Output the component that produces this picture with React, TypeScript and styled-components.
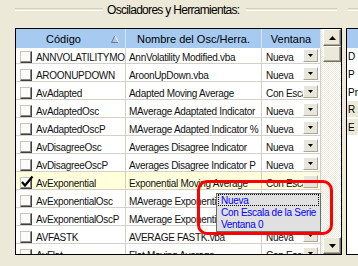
import React from 'react';
import styled, {createGlobalStyle} from 'styled-components';

const GlobalStyle = createGlobalStyle`
    html, body {
        margin: 0;
        padding: 0;
        background: #ece9d8;
        overflow: hidden;
    }
    body {
        font-family: "Liberation Sans", Arial, sans-serif;
    }
`;

interface RowData {
    code: string;
    name: string;
    win: string;
    checked?: boolean;
}

const rows: RowData[] = [
    {code: 'ANNVOLATILITYMOD', name: 'AnnVolatility Modified.vba', win: 'Nueva'},
    {code: 'AROONUPDOWN', name: 'AroonUpDown.vba', win: 'Nueva'},
    {code: 'AvAdapted', name: 'Adapted Moving Average', win: 'Con Escala de la Serie'},
    {code: 'AvAdaptedOsc', name: 'MAverage Adaptated Indicator', win: 'Nueva'},
    {code: 'AvAdaptedOscP', name: 'MAverage Adapted Indicator %', win: 'Nueva'},
    {code: 'AvDisagreeOsc', name: 'Averages Disagree Indicator', win: 'Nueva'},
    {code: 'AvDisagreeOscP', name: 'Averages Disagree Indicator P', win: 'Nueva'},
    {code: 'AvExponential', name: 'Exponential Moving Average', win: 'Con Escala de la Serie', checked: true},
    {code: 'AvExponentialOsc', name: 'MAverage Exponential Indicator', win: 'Nueva'},
    {code: 'AvExponentialOscP', name: 'MAverage Exponential Indicator %', win: 'Nueva'},
    {code: 'AVFASTK', name: 'AVERAGE FASTK.vba', win: 'Nueva'},
    {code: 'AvFlat', name: 'Flat Moving Average', win: 'Con Escala de la Serie'},
];

const sideRows = [
    {label: 'D'},
    {label: 'P'},
    {label: 'Pr'},
    {label: 'R', button: true},
    {label: 'E', button: true},
];

const COLS = [110, 136, 59];

/* Window */
const Window = styled.div`
    position: relative;
    width: 358px;
    height: 266px;
    background: #ece9d8;
    overflow: hidden;
`;

/* Group box title with etched lines */
const TitleRow = styled.div`
    display: flex;
    align-items: center;
    height: 19px;
    padding-left: 15px;
`;

const EtchedLine = styled.div<{ $width?: number }>`
    height: 1px;
    border-top: 1px solid #d0d0bf;
    border-bottom: 1px solid #fff;
    ${({$width}) => ($width ? `width: ${$width}px; flex-shrink: 0;` : 'flex: 1;')}
`;

const GroupTitle = styled.span`
    font-size: 12px;
    letter-spacing: -0.7px;
    color: #000;
    margin: 0 7px 0 4px;
    white-space: nowrap;
`;

const TitleGap = styled.div`
    width: 11px;
    flex-shrink: 0;
`;

/* Main content */
const Content = styled.div`
    display: flex;
    gap: 4px;
    margin-top: 9px;
    padding-left: 15px;
`;

const Grid = styled.div`
    width: 327px;
    height: 227px;
    box-sizing: border-box;
    border: 1px solid #000;
    display: flex;
    background: #fff;
`;

const Table = styled.div`
    width: 305px;
    display: flex;
    flex-direction: column;
`;

const HeaderRow = styled.div`
    display: flex;
    height: 19px;
    flex-shrink: 0;
    background: #a6caf0;
`;

const HeaderCell = styled.div<{ $w: number }>`
    width: ${({$w}) => $w}px;
    flex-shrink: 0;
    box-sizing: border-box;
    border-right: 1px solid #d6e4f2;
    display: flex;
    align-items: center;
    font-size: 11px;
    color: #000;
    white-space: nowrap;
`;

const HeaderLabel = styled.span`
    flex: 1;
    text-align: center;
`;

const SortIcon = styled.svg`
    width: 8px;
    height: 8px;
    margin-right: 6px;
    flex-shrink: 0;
`;

const Viewport = styled.div`
    flex: 1;
    overflow: hidden;
`;

/* rows scrolled a couple of pixels */
const ScrollContent = styled.div`
    margin-top: -2px;
`;

const Row = styled.div<{ $hl?: boolean }>`
    display: flex;
    height: 18px;
    box-sizing: border-box;
    border-bottom: 1px solid #d4d0c8;
    background: ${({$hl}) => ($hl ? '#ffffdc' : '#fff')};
`;

const Cell = styled.div<{ $w: number; $pad?: number }>`
    width: ${({$w}) => $w}px;
    flex-shrink: 0;
    box-sizing: border-box;
    border-right: 1px solid #d4d0c8;
    padding-left: ${({$pad}) => $pad ?? 3}px;
    display: flex;
    align-items: flex-end;
    overflow: hidden;
`;

const CellText = styled.span`
    flex: 1;
    min-width: 0;
    overflow: hidden;
    white-space: nowrap;
    font-size: 10px;
    letter-spacing: -0.3px;
    line-height: 11px;
    color: #111;
`;

const CheckBox = styled.div`
    position: relative;
    width: 12px;
    height: 12px;
    box-sizing: border-box;
    flex-shrink: 0;
    margin-right: 4px;
    background: #fbfbf8;
    border-top: 1px solid #c8c6bc;
    border-left: 1px solid #c8c6bc;
    border-right: 1px solid #404040;
    border-bottom: 1px solid #404040;
    box-shadow: inset -1px -1px 0 #8a8a8a;
`;

const CheckMark = styled.svg`
    position: absolute;
    left: -1px;
    top: -3px;
    width: 14px;
    height: 13px;
`;

const DropButton = styled.div`
    width: 15px;
    height: 13px;
    flex-shrink: 0;
    box-sizing: border-box;
    margin: 0 2px 1px 0;
    background: #e8e6da;
    border-top: 1px solid #fff;
    border-left: 1px solid #fff;
    border-right: 1px solid #aca899;
    border-bottom: 1px solid #aca899;
    display: flex;
    align-items: center;
    justify-content: center;
`;

/* Scrollbar */
const ScrollBar = styled.div`
    width: 20px;
    display: flex;
    flex-direction: column;
    background: repeating-conic-gradient(#fff 0 25%, #ece9d8 0 50%) 0 0 / 2px 2px;
    padding-left: 2px;
    box-sizing: border-box;
`;

const ScrollButton = styled.div<{ $h: number }>`
    height: ${({$h}) => $h}px;
    flex-shrink: 0;
    box-sizing: border-box;
    background: #ece9d8;
    border-top: 1px solid #fff;
    border-left: 1px solid #fff;
    border-right: 1px solid #716f64;
    border-bottom: 1px solid #716f64;
    box-shadow: inset -1px -1px 0 #aca899;
    display: flex;
    align-items: center;
    justify-content: center;
`;

const Track = styled.div`
    flex: 1;
`;

/* Side grid on the right */
const SidePanel = styled.div`
    width: 40px;
    height: 227px;
    flex-shrink: 0;
    box-sizing: border-box;
    border: 1px solid #000;
    background: #fff;
    display: flex;
    flex-direction: column;
`;

const SideHeader = styled.div`
    height: 19px;
    flex-shrink: 0;
    background: #a6caf0;
`;

const SideRow = styled.div<{ $button?: boolean; $first?: boolean }>`
    height: ${({$first}) => ($first ? 16 : 18)}px;
    box-sizing: border-box;
    display: flex;
    align-items: flex-end;
    padding: 0 0 ${({$button}) => ($button ? 2 : 1)}px 1px;
    background: ${({$button}) => ($button ? '#ece9d8' : '#fff')};
    border-bottom: 1px solid #fff;
    border-top: ${({$button}) => ($button ? '1px solid #fff' : 'none')};
    font-size: 10px;
    line-height: 11px;
    color: #000;
`;

/* Open dropdown list */
const DropList = styled.div`
    position: absolute;
    left: 216px;
    top: 193px;
    width: 105px;
    box-sizing: border-box;
    border: 1px solid #6d6d6d;
    background: #e0e0e0;
    padding: 0 1px 1px 1px;
`;

const DropItem = styled.div<{ $focus?: boolean }>`
    height: 12px;
    box-sizing: border-box;
    padding-left: 2px;
    font-size: 10px;
    letter-spacing: -0.3px;
    line-height: 11px;
    color: #0000ff;
    white-space: nowrap;
    border: 1px ${({$focus}) => ($focus ? 'dotted #000' : 'solid transparent')};
`;

/* Red annotation */
const Highlight = styled.div`
    position: absolute;
    left: 197px;
    top: 180px;
    width: 136px;
    height: 55px;
    box-sizing: border-box;
    border: 3px solid #ff0000;
    border-radius: 10px;
`;

const DownArrow: React.FC<{ w?: number }> = ({w = 5}) => (
    <svg width={w} height={Math.ceil(w / 2)} viewBox={`0 0 ${w} ${Math.ceil(w / 2)}`}>
        <polygon points={`0,0 ${w},0 ${w / 2},${Math.ceil(w / 2)}`} fill="#000"/>
    </svg>
);

const UpArrow: React.FC = () => (
    <svg width={7} height={4} viewBox="0 0 7 4">
        <polygon points="0,4 7,4 3.5,0" fill="#000"/>
    </svg>
);

const App: React.FC = () => {
    return (
        <>
            <GlobalStyle/>
            <Window>
                <TitleRow>
                    <EtchedLine $width={88}/>
                    <GroupTitle>Osciladores y Herramientas:</GroupTitle>
                    <EtchedLine/>
                    <TitleGap/>
                    <EtchedLine $width={10}/>
                </TitleRow>

                <Content>
                    <Grid>
                        <Table>
                            <HeaderRow>
                                <HeaderCell $w={COLS[0]}>
                                    <HeaderLabel>Código</HeaderLabel>
                                    <SortIcon viewBox="0 0 8 8">
                                        <line x1="0.5" y1="7.5" x2="4" y2="0.5" stroke="#6f7b88"/>
                                        <line x1="0.5" y1="7.5" x2="7.5" y2="7.5" stroke="#6f7b88"/>
                                        <line x1="4" y1="0.5" x2="7.5" y2="7.5" stroke="#fff"/>
                                    </SortIcon>
                                </HeaderCell>
                                <HeaderCell $w={COLS[1]}>
                                    <HeaderLabel>Nombre del Osc/Herra.</HeaderLabel>
                                </HeaderCell>
                                <HeaderCell $w={COLS[2]}>
                                    <HeaderLabel>Ventana</HeaderLabel>
                                </HeaderCell>
                            </HeaderRow>
                            <Viewport>
                                <ScrollContent>
                                    {rows.map((r) => (
                                        <Row key={r.code} $hl={r.checked}>
                                            <Cell $w={COLS[0]} $pad={4}>
                                                <CheckBox>
                                                    {r.checked && (
                                                        <CheckMark viewBox="0 0 14 13">
                                                            <path d="M2 7 L5 10.5 L12.5 1.5" fill="none" stroke="#000"
                                                                  strokeWidth="2.2"/>
                                                        </CheckMark>
                                                    )}
                                                </CheckBox>
                                                <CellText>{r.code}</CellText>
                                            </Cell>
                                            <Cell $w={COLS[1]}>
                                                <CellText>{r.name}</CellText>
                                            </Cell>
                                            <Cell $w={COLS[2]} $pad={4}>
                                                <CellText>{r.win}</CellText>
                                                <DropButton><DownArrow/></DropButton>
                                            </Cell>
                                        </Row>
                                    ))}
                                </ScrollContent>
                            </Viewport>
                        </Table>
                        <ScrollBar>
                            <ScrollButton $h={17}><UpArrow/></ScrollButton>
                            <ScrollButton $h={16}/>
                            <Track/>
                            <ScrollButton $h={17}><DownArrow w={7}/></ScrollButton>
                        </ScrollBar>
                    </Grid>

                    <SidePanel>
                        <SideHeader/>
                        {sideRows.map((s, i) => (
                            <SideRow key={s.label} $button={s.button} $first={i === 0}>
                                {s.label}
                            </SideRow>
                        ))}
                    </SidePanel>
                </Content>

                <DropList>
                    <DropItem $focus>Nueva</DropItem>
                    <DropItem>Con Escala de la Serie</DropItem>
                    <DropItem>Ventana 0</DropItem>
                </DropList>

                <Highlight/>
            </Window>
        </>
    );
};

export default App;
